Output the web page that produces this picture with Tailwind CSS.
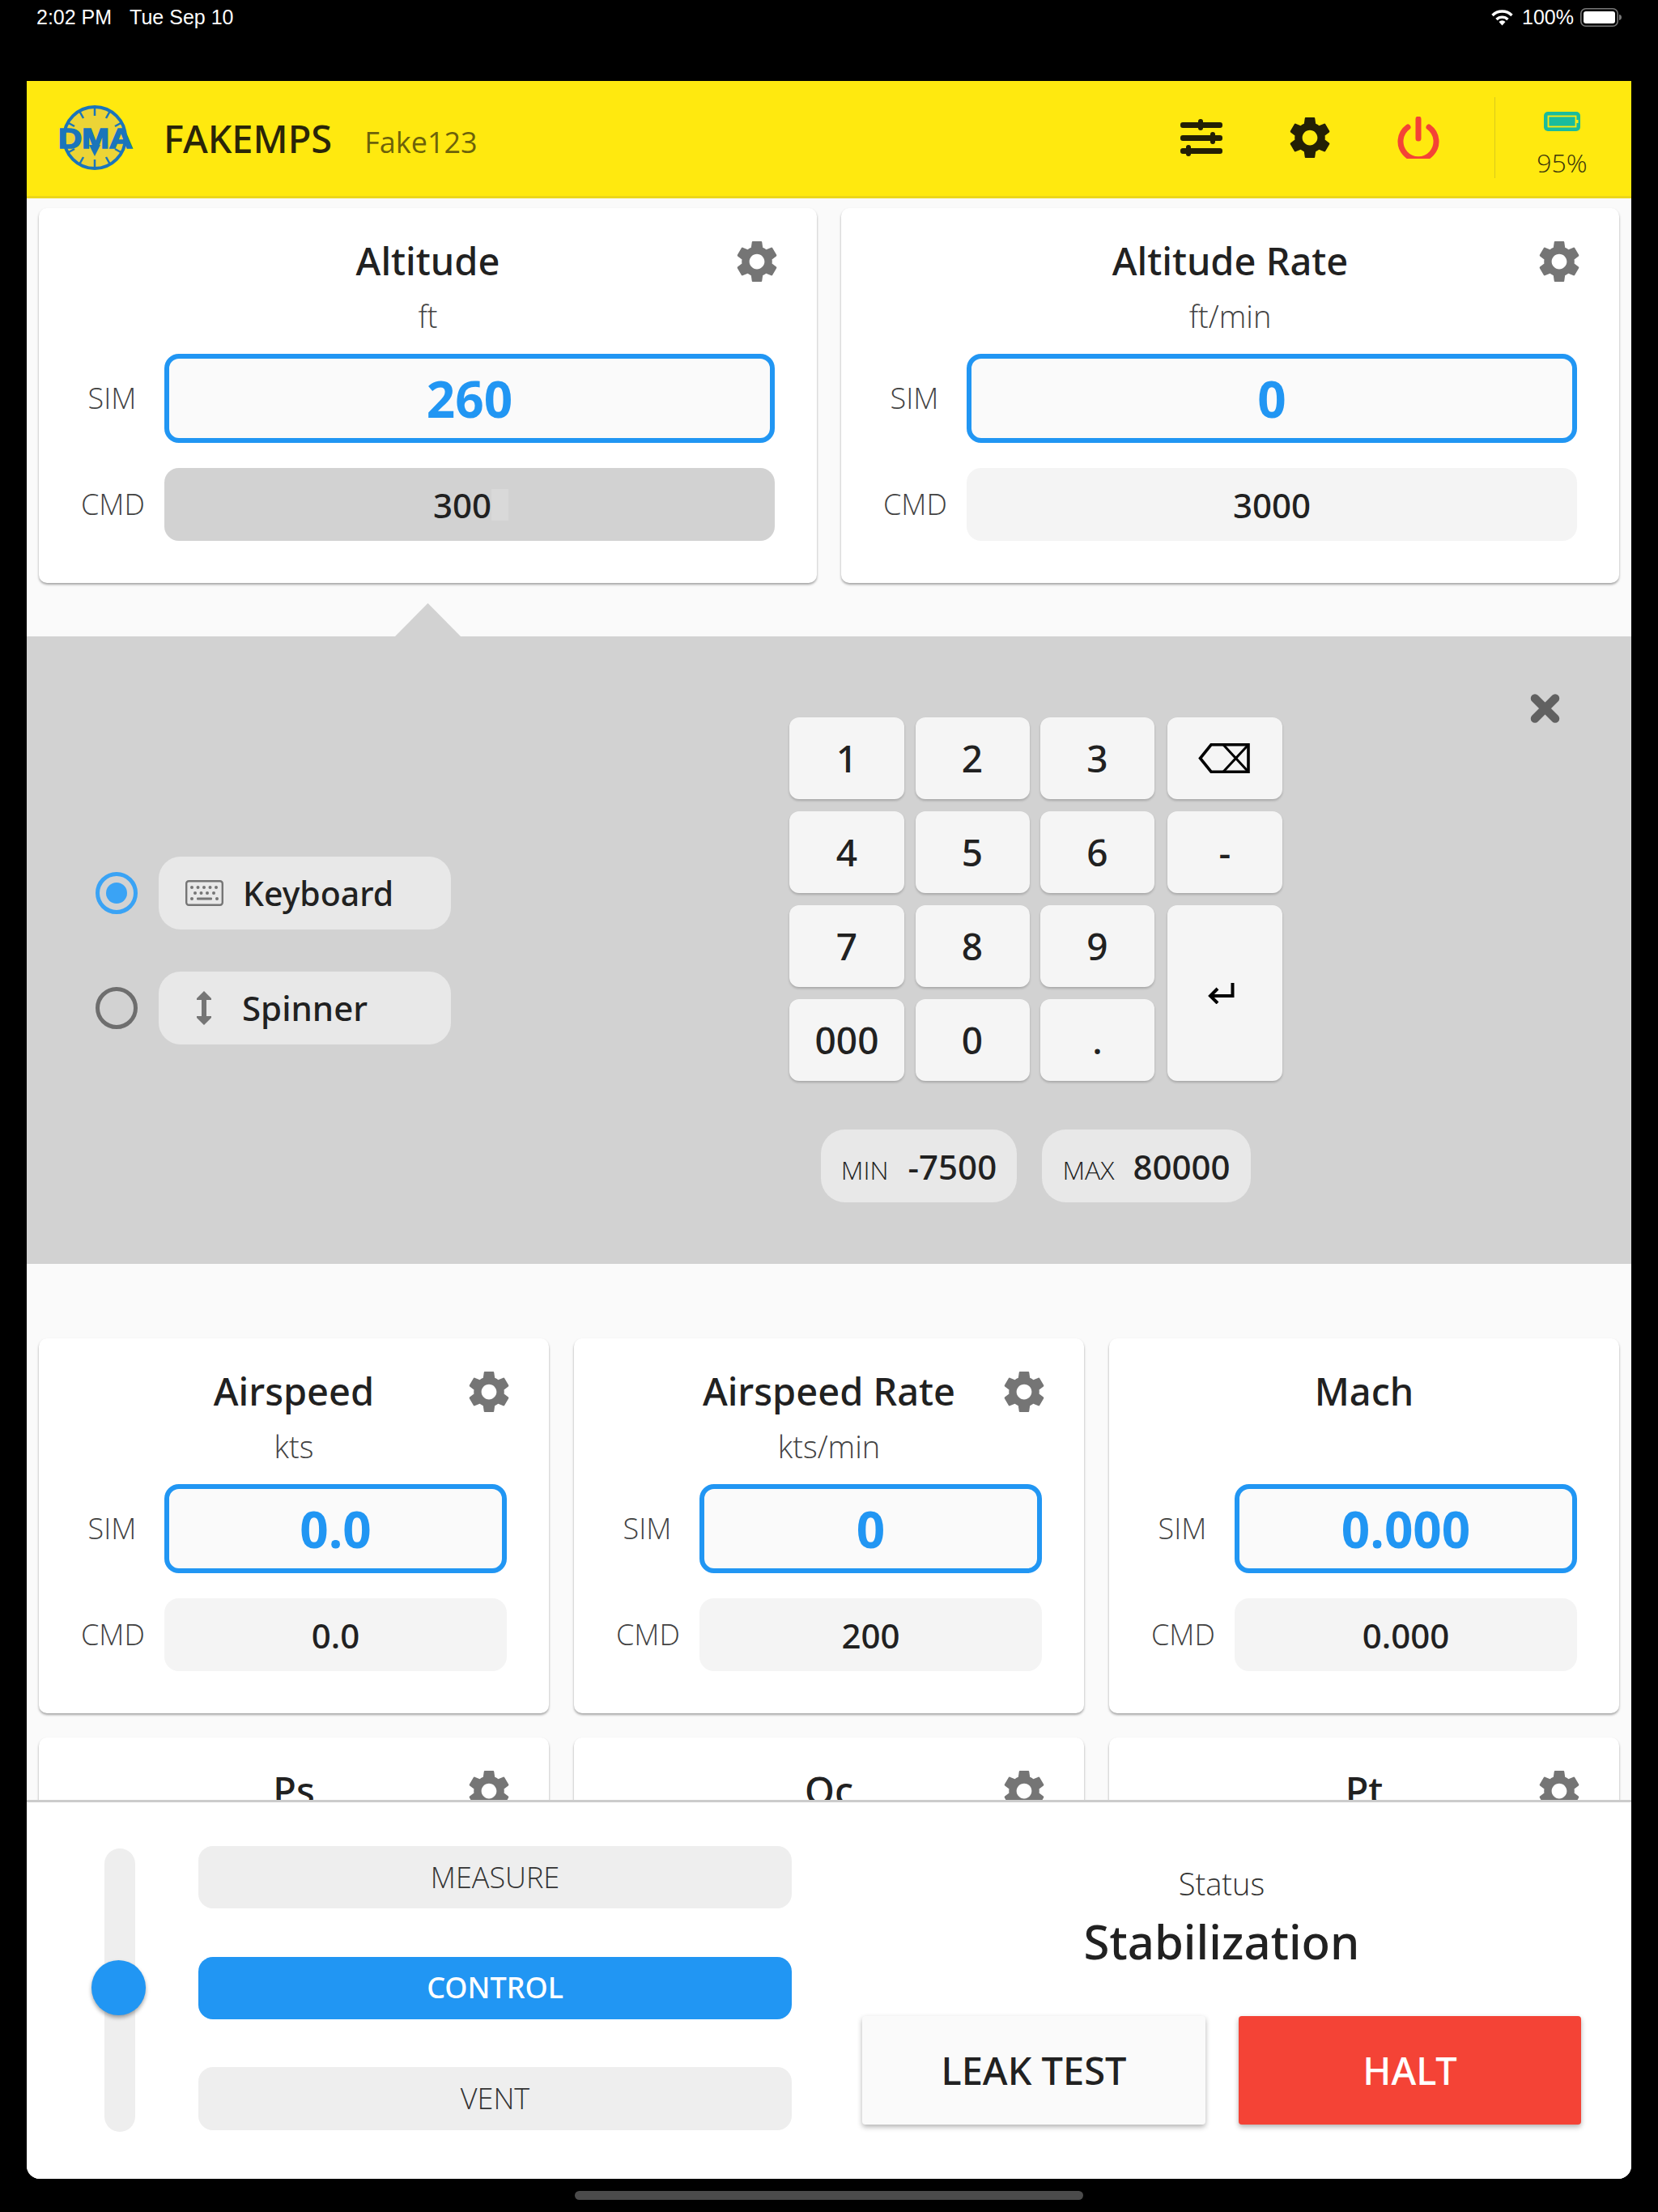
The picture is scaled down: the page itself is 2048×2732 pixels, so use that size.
<!DOCTYPE html>
<html lang="en">
<head>
    <meta charset="UTF-8">
    <title>FAKEMPS</title>
    <script src="https://cdn.jsdelivr.net/npm/@tailwindcss/browser@4"></script>
</head>
<body class="bg-black font-['Open_Sans',sans-serif] text-[#212121]">
    <svg class="hidden">
        <symbol id="gear" viewBox="2.4 2.4 19.2 19.2">
            <path d="M19.14,12.94c0.04-0.3,0.06-0.61,0.06-0.94c0-0.32-0.02-0.64-0.07-0.94l2.03-1.58c0.18-0.14,0.23-0.41,0.12-0.61 l-1.92-3.32c-0.12-0.22-0.37-0.29-0.59-0.22l-2.39,0.96c-0.5-0.38-1.03-0.7-1.62-0.94L14.4,2.81c-0.04-0.24-0.24-0.41-0.48-0.41 h-3.84c-0.24,0-0.43,0.17-0.47,0.41L9.25,5.35C8.66,5.59,8.12,5.92,7.63,6.29L5.24,5.33c-0.22-0.08-0.47,0-0.59,0.22L2.74,8.87 C2.62,9.08,2.66,9.34,2.86,9.48l2.03,1.58C4.84,11.36,4.8,11.69,4.8,12s0.02,0.64,0.07,0.94l-2.03,1.58 c-0.18,0.14-0.23,0.41-0.12,0.61l1.92,3.32c0.12,0.22,0.37,0.29,0.59,0.22l2.39-0.96c0.5,0.38,1.03,0.7,1.62,0.94l0.36,2.54 c0.05,0.24,0.24,0.41,0.48,0.41h3.84c0.24,0,0.44-0.17,0.47-0.41l0.36-2.54c0.59-0.24,1.13-0.56,1.62-0.94l2.39,0.96 c0.22,0.08,0.47,0,0.59-0.22l1.92-3.32c0.12-0.22,0.07-0.47-0.12-0.61L19.14,12.94z M12,15.6c-1.98,0-3.6-1.62-3.6-3.6 s1.62-3.6,3.6-3.6s3.6,1.62,3.6,3.6S13.98,15.6,12,15.6z" fill="currentColor"/>
        </symbol>
    </svg>

    <!-- iOS status bar -->
    <div class="h-[100px] pt-[7px] pl-[45px] pr-[45px] flex justify-between items-start text-white font-['Liberation_Sans',sans-serif] text-[25px] leading-[28px]">
        <div class="flex gap-[22px]"><span>2:02 PM</span><span>Tue Sep 10</span></div>
        <div class="flex items-center">
            <svg class="w-[27px] h-[21px] mr-[11px]" viewBox="0 0 27 21" fill="none" stroke="white" stroke-width="3.4">
                <path d="M1.5 8a17 17 0 0 1 24 0"/>
                <path d="M6.5 13a10 10 0 0 1 14 0"/>
                <path d="M13.5 20.5l-4-4.500a5.500 5.500 0 0 1 8 0z" fill="white" stroke="none"/>
            </svg>
            <span class="mr-[8px]">100%</span>
            <svg class="w-[51px] h-[23px]" viewBox="0 0 51 23">
                <rect x="0.8" y="0.8" width="45.400" height="21.4" rx="6" fill="none" stroke="#777777" stroke-width="1.6"/>
                <rect x="4" y="4" width="39" height="15" rx="3" fill="white"/>
                <path d="M48 8v7a3.5 3.5 0 0 0 3-3.500a3.500 3.500 0 0 0-3-3.500z" fill="#777777"/>
            </svg>
        </div>
    </div>

    <div class="ml-[33px] w-[1982px] h-[2591px] flex flex-col rounded-b-[16px] overflow-hidden bg-white">
        <!-- header -->
        <header class="h-[145px] shrink-0 bg-[#ffe90f] border-b-[3px] border-[#ecd71a] flex items-center pl-[39px] pr-[3px] relative">
            <svg class="w-[92px] h-[84px] overflow-visible" viewBox="0 0 92 84">
                <circle cx="45" cy="41" r="38" fill="#ecd436" stroke="#1a75bb" stroke-width="4"/>
                <path d="M45 3v11M45 68v11M26 8l5 9M64 8l-5 9M26 74l5-9M64 74l-5-9M11 22l9 5M79 22l-9 5M11 60l9-5M79 60l-9-5" stroke="#1a75bb" stroke-width="2.5"/>
                <path d="M38 50l7 14l7-14z" fill="#1a75bb"/>
                <text x="0" y="54" textLength="92" lengthAdjust="spacingAndGlyphs" font-family="Liberation Sans" font-weight="700" font-size="35" fill="#1a75bb" stroke="#1a75bb" stroke-width="1.600">DMA</text>
            </svg>
            <span class="ml-[38px] text-[47px] font-['Noto_Sans'] font-medium text-[#2a2508] leading-none mt-[1px]">FAKEMPS</span>
            <span class="ml-[40px] text-[36px] text-[#2a2508]/70 leading-none mt-[10px]">Fake123</span>
            <div class="ml-auto flex items-center h-[100px] -mt-[2px]">
                <svg class="w-[52px] h-[46px]" viewBox="0 0 52 46" fill="#231f05">
                    <rect x="0" y="4" width="52" height="7" rx="3"/>
                    <rect x="0" y="20" width="52" height="7" rx="3"/>
                    <rect x="0" y="36" width="52" height="7" rx="3"/>
                    <rect x="22" y="0" width="6" height="14" rx="3"/>
                    <rect x="37" y="16" width="6" height="15" rx="3"/>
                    <rect x="7" y="32" width="6" height="14" rx="3"/>
                </svg>
                <svg class="w-[50px] h-[50px] ml-[83px] text-[#231f05]"><use href="#gear"/></svg>
                <svg class="w-[52px] h-[52px] ml-[83px]" viewBox="0 0 52 52" fill="none" stroke="#f44336" stroke-width="7" stroke-linecap="round">
                    <path d="M13 13a22 22 0 1 0 26 0"/>
                    <path d="M26 3v24"/>
                </svg>
                <div class="w-[1px] h-[100px] ml-[68px] bg-[#d9c81c]"></div>
                <div class="w-[165px] flex flex-col items-center mt-[20px]">
                    <svg class="w-[45px] h-[24px] -mt-[6px]" viewBox="0 0 45 24">
                        <rect x="0" y="0" width="45" height="24" rx="5" fill="#1abc9c"/>
                        <rect x="5.500" y="5.500" width="34" height="13" fill="#1abc9c" stroke="#ffe90f" stroke-width="1.800"/>
                        <rect x="40" y="10" width="2.500" height="4" fill="#ffe90f"/>
                    </svg>
                    <span class="text-[32px] font-light text-[#3a340a] leading-none mt-[23px]">95%</span>
                </div>
            </div>
        </header>

        <!-- scrolling content -->
        <main class="flex-1 min-h-0 overflow-hidden bg-[#fafafa] pt-[12px]">
            <div class="grid grid-cols-2 gap-[30px] px-[15px]">
                <div class="relative h-[463px] bg-white rounded-[10px] shadow-[0_2px_3px_rgba(0,0,0,0.35)] text-center">
                    <svg class="absolute top-[41px] right-[49px] w-[50px] h-[50px] text-[#757575]"><use href="#gear"/></svg>
                    <div class="pt-[40px] h-[100px] text-[47px] font-['Noto_Sans'] font-medium leading-[50px]">Altitude</div>
                    <div class="h-[80px] text-[38px] font-light leading-[66px] text-[#424242]">ft</div>
                    <div class="flex items-center pl-[52px] pr-[52px] gap-[26px]">
                        <div class="w-[77px] text-[36px] font-light text-[#424242]">SIM</div>
                        <div class="flex-1 h-[110px] rounded-[18px] border-[6px] border-[#2196f3] bg-[#fafafa] flex items-center justify-center text-[62px] font-bold text-[#2196f3]">260</div>
                    </div>
                    <div class="flex items-center pl-[52px] pr-[52px] gap-[26px] mt-[31px]">
                        <div class="w-[77px] text-[36px] font-light text-[#424242]">CMD</div>
                        <div class="flex-1 h-[90px] rounded-[18px] bg-[#d2d2d2] flex items-center justify-center text-[42px] font-['Noto_Sans'] font-medium pl-[9px]"><span class="-ml-[6px]">300</span><span class="w-[21px] h-[39px] bg-[#d9d9d9]"></span></div>
                    </div>
                </div>
                <div class="relative h-[463px] bg-white rounded-[10px] shadow-[0_2px_3px_rgba(0,0,0,0.35)] text-center">
                    <svg class="absolute top-[41px] right-[49px] w-[50px] h-[50px] text-[#757575]"><use href="#gear"/></svg>
                    <div class="pt-[40px] h-[100px] text-[47px] font-['Noto_Sans'] font-medium leading-[50px]">Altitude Rate</div>
                    <div class="h-[80px] text-[38px] font-light leading-[66px] text-[#424242]">ft/min</div>
                    <div class="flex items-center pl-[52px] pr-[52px] gap-[26px]">
                        <div class="w-[77px] text-[36px] font-light text-[#424242]">SIM</div>
                        <div class="flex-1 h-[110px] rounded-[18px] border-[6px] border-[#2196f3] bg-[#fafafa] flex items-center justify-center text-[62px] font-bold text-[#2196f3]">0</div>
                    </div>
                    <div class="flex items-center pl-[52px] pr-[52px] gap-[26px] mt-[31px]">
                        <div class="w-[77px] text-[36px] font-light text-[#424242]">CMD</div>
                        <div class="flex-1 h-[90px] rounded-[18px] bg-[#f4f4f4] flex items-center justify-center text-[42px] font-['Noto_Sans'] font-medium">3000</div>
                    </div>
                </div>
            </div>

            <!-- entry panel -->
            <section class="relative mt-[66px] h-[775px] bg-[#d2d2d2] flex items-center pl-[85px]">
                <svg class="absolute -top-[41px] left-[454px] w-[83px] h-[42px]" viewBox="0 0 83 42"><path d="M41.5 0L83 42H0z" fill="#d2d2d2"/></svg>
                <svg class="absolute top-[71px] right-[88px] w-[37px] h-[36px]" viewBox="0 0 37 36" stroke="#616161" stroke-width="10.500" stroke-linecap="round"><path d="M6 5.500l25 25M31 5.500l-25 25"/></svg>

                <div class="flex flex-col gap-[52px] shrink-0">
                    <div class="flex items-center gap-[26px]">
                        <div class="w-[52px] h-[52px] rounded-full border-[5px] border-[#3aa3f5] flex items-center justify-center"><div class="w-[26px] h-[26px] rounded-full bg-[#3aa3f5]"></div></div>
                        <div class="w-[361px] h-[90px] rounded-[27px] bg-[#e8e8e8] flex items-center pl-[33px] text-[41px] font-['Noto_Sans'] font-medium">
                            <svg class="w-[47px] h-[32px] mr-[24px]" viewBox="0 0 47 32" fill="#757575">
                                <rect x="1.2" y="1.2" width="44.6" height="29.6" rx="3" fill="none" stroke="#757575" stroke-width="2.4"/>
                                <circle cx="8" cy="9" r="2"/><circle cx="15.500" cy="9" r="2"/><circle cx="23" cy="9" r="2"/><circle cx="30.500" cy="9" r="2"/><circle cx="38" cy="9" r="2"/>
                                <circle cx="12" cy="16" r="2"/><circle cx="19.500" cy="16" r="2"/><circle cx="27" cy="16" r="2"/><circle cx="35" cy="16" r="2"/>
                                <circle cx="8" cy="23" r="2"/><rect x="14" y="21.500" width="19" height="3" rx="1"/><circle cx="39" cy="23" r="2"/>
                            </svg>
                            <span class="mt-[2px]">Keyboard</span>
                        </div>
                    </div>
                    <div class="flex items-center gap-[26px]">
                        <div class="w-[52px] h-[52px] rounded-full border-[5px] border-[#6e6e6e]"></div>
                        <div class="w-[361px] h-[90px] rounded-[27px] bg-[#e8e8e8] flex items-center pl-[47px] text-[42px] font-['Noto_Sans'] font-medium">
                            <svg class="w-[18px] h-[42px] mr-[38px]" viewBox="0 0 18 42" fill="#757575"><path d="M9 0l9 9v2h-6v20h6v2l-9 9l-9-9v-2h6V11H0V9z"/></svg>
                            <span class="-mt-[1px]">Spinner</span>
                        </div>
                    </div>
                </div>

                <div class="self-start mt-[100px] ml-[418px]">
                    <div class="grid grid-cols-[142px_141px_141px_144.5px] grid-rows-[101px_101px_101px_101px] gap-x-[13.5px] gap-y-[15px] text-[46px] font-['Noto_Sans'] font-medium">
                        <button class="rounded-[12px] bg-[#f5f5f5] shadow-[0_2px_3px_rgba(0,0,0,0.2)] flex items-center justify-center">1</button>
                        <button class="rounded-[12px] bg-[#f5f5f5] shadow-[0_2px_3px_rgba(0,0,0,0.2)] flex items-center justify-center">2</button>
                        <button class="rounded-[12px] bg-[#f5f5f5] shadow-[0_2px_3px_rgba(0,0,0,0.2)] flex items-center justify-center">3</button>
                        <button class="ml-[2.5px] rounded-[12px] bg-[#f5f5f5] shadow-[0_2px_3px_rgba(0,0,0,0.2)] flex items-center justify-center">
                            <svg class="w-[64px] h-[37px] -ml-[2px]" viewBox="0 0 64 37" fill="none" stroke="black" stroke-width="3.600"><path d="M62 1.800H16L2.500 18.500L16 35.200h46z"/><path d="M31 1.800l31 33.400M62 1.800L31 35.200" stroke-width="3"/></svg>
                        </button>
                        <button class="rounded-[12px] bg-[#f5f5f5] shadow-[0_2px_3px_rgba(0,0,0,0.2)] flex items-center justify-center">4</button>
                        <button class="rounded-[12px] bg-[#f5f5f5] shadow-[0_2px_3px_rgba(0,0,0,0.2)] flex items-center justify-center">5</button>
                        <button class="rounded-[12px] bg-[#f5f5f5] shadow-[0_2px_3px_rgba(0,0,0,0.2)] flex items-center justify-center">6</button>
                        <button class="ml-[2.5px] rounded-[12px] bg-[#f5f5f5] shadow-[0_2px_3px_rgba(0,0,0,0.2)] flex items-center justify-center">-</button>
                        <button class="rounded-[12px] bg-[#f5f5f5] shadow-[0_2px_3px_rgba(0,0,0,0.2)] flex items-center justify-center">7</button>
                        <button class="rounded-[12px] bg-[#f5f5f5] shadow-[0_2px_3px_rgba(0,0,0,0.2)] flex items-center justify-center">8</button>
                        <button class="rounded-[12px] bg-[#f5f5f5] shadow-[0_2px_3px_rgba(0,0,0,0.2)] flex items-center justify-center">9</button>
                        <button class="ml-[2.5px] row-span-2 rounded-[12px] bg-[#f5f5f5] shadow-[0_2px_3px_rgba(0,0,0,0.2)] flex items-center justify-center">
                            <svg class="w-[33px] h-[26px] -ml-[9px] mt-[1px]" viewBox="0 0 33 26" fill="none" stroke="black" stroke-width="4"><path d="M30.500 0v16H5"/><path d="M12 7l-9 9l9 9"/></svg>
                        </button>
                        <button class="rounded-[12px] bg-[#f5f5f5] shadow-[0_2px_3px_rgba(0,0,0,0.2)] flex items-center justify-center">000</button>
                        <button class="rounded-[12px] bg-[#f5f5f5] shadow-[0_2px_3px_rgba(0,0,0,0.2)] flex items-center justify-center">0</button>
                        <button class="rounded-[12px] bg-[#f5f5f5] shadow-[0_2px_3px_rgba(0,0,0,0.2)] flex items-center justify-center">.</button>
                    </div>
                    <div class="flex justify-center gap-[31px] mt-[60px]">
                        <div class="w-[242px] h-[90px] rounded-[30px] bg-[#e8e8e8] flex items-baseline justify-center gap-[24px] pt-[14px] text-[42px] font-['Noto_Sans'] font-medium">
                            <span class="text-[32px] font-['Open_Sans'] font-light">MIN</span><span>-7500</span>
                        </div>
                        <div class="w-[258px] h-[90px] rounded-[30px] bg-[#e8e8e8] flex items-baseline justify-center gap-[23px] pt-[14px] text-[42px] font-['Noto_Sans'] font-medium">
                            <span class="text-[32px] font-['Open_Sans'] font-light">MAX</span><span>80000</span>
                        </div>
                    </div>
                </div>
            </section>

            <div class="grid grid-cols-3 gap-x-[31px] gap-y-[30px] px-[15px] mt-[92px]">
                <div class="relative h-[463px] bg-white rounded-[10px] shadow-[0_2px_3px_rgba(0,0,0,0.35)] text-center">
                    <svg class="absolute top-[41px] right-[49px] w-[50px] h-[50px] text-[#757575]"><use href="#gear"/></svg>
                    <div class="pt-[40px] h-[100px] text-[47px] font-['Noto_Sans'] font-medium leading-[50px]">Airspeed</div>
                    <div class="h-[80px] text-[38px] font-light leading-[66px] text-[#424242]">kts</div>
                    <div class="flex items-center pl-[52px] pr-[52px] gap-[26px]">
                        <div class="w-[77px] text-[36px] font-light text-[#424242]">SIM</div>
                        <div class="flex-1 h-[110px] rounded-[18px] border-[6px] border-[#2196f3] bg-[#fafafa] flex items-center justify-center text-[62px] font-bold text-[#2196f3]">0.0</div>
                    </div>
                    <div class="flex items-center pl-[52px] pr-[52px] gap-[26px] mt-[31px]">
                        <div class="w-[77px] text-[36px] font-light text-[#424242]">CMD</div>
                        <div class="flex-1 h-[90px] rounded-[18px] bg-[#f4f4f4] flex items-center justify-center text-[42px] font-['Noto_Sans'] font-medium">0.0</div>
                    </div>
                </div>
                <div class="relative h-[463px] bg-white rounded-[10px] shadow-[0_2px_3px_rgba(0,0,0,0.35)] text-center">
                    <svg class="absolute top-[41px] right-[49px] w-[50px] h-[50px] text-[#757575]"><use href="#gear"/></svg>
                    <div class="pt-[40px] h-[100px] text-[47px] font-['Noto_Sans'] font-medium leading-[50px]">Airspeed Rate</div>
                    <div class="h-[80px] text-[38px] font-light leading-[66px] text-[#424242]">kts/min</div>
                    <div class="flex items-center pl-[52px] pr-[52px] gap-[26px]">
                        <div class="w-[77px] text-[36px] font-light text-[#424242]">SIM</div>
                        <div class="flex-1 h-[110px] rounded-[18px] border-[6px] border-[#2196f3] bg-[#fafafa] flex items-center justify-center text-[62px] font-bold text-[#2196f3]">0</div>
                    </div>
                    <div class="flex items-center pl-[52px] pr-[52px] gap-[26px] mt-[31px]">
                        <div class="w-[77px] text-[36px] font-light text-[#424242]">CMD</div>
                        <div class="flex-1 h-[90px] rounded-[18px] bg-[#f4f4f4] flex items-center justify-center text-[42px] font-['Noto_Sans'] font-medium">200</div>
                    </div>
                </div>
                <div class="relative h-[463px] bg-white rounded-[10px] shadow-[0_2px_3px_rgba(0,0,0,0.35)] text-center">
                    <div class="pt-[40px] h-[100px] text-[47px] font-['Noto_Sans'] font-medium leading-[50px]">Mach</div>
                    <div class="h-[80px]"></div>
                    <div class="flex items-center pl-[52px] pr-[52px] gap-[26px]">
                        <div class="w-[77px] text-[36px] font-light text-[#424242]">SIM</div>
                        <div class="flex-1 h-[110px] rounded-[18px] border-[6px] border-[#2196f3] bg-[#fafafa] flex items-center justify-center text-[62px] font-bold text-[#2196f3]">0.000</div>
                    </div>
                    <div class="flex items-center pl-[52px] pr-[52px] gap-[26px] mt-[31px]">
                        <div class="w-[77px] text-[36px] font-light text-[#424242]">CMD</div>
                        <div class="flex-1 h-[90px] rounded-[18px] bg-[#f4f4f4] flex items-center justify-center text-[42px] font-['Noto_Sans'] font-medium">0.000</div>
                    </div>
                </div>
                <div class="relative h-[463px] bg-white rounded-[10px] shadow-[0_2px_3px_rgba(0,0,0,0.35)] text-center">
                    <svg class="absolute top-[41px] right-[49px] w-[50px] h-[50px] text-[#757575]"><use href="#gear"/></svg>
                    <div class="pt-[40px] text-[47px] font-['Noto_Sans'] font-medium leading-[50px]">Ps</div>
                </div>
                <div class="relative h-[463px] bg-white rounded-[10px] shadow-[0_2px_3px_rgba(0,0,0,0.35)] text-center">
                    <svg class="absolute top-[41px] right-[49px] w-[50px] h-[50px] text-[#757575]"><use href="#gear"/></svg>
                    <div class="pt-[40px] text-[47px] font-['Noto_Sans'] font-medium leading-[50px]">Qc</div>
                </div>
                <div class="relative h-[463px] bg-white rounded-[10px] shadow-[0_2px_3px_rgba(0,0,0,0.35)] text-center">
                    <svg class="absolute top-[41px] right-[49px] w-[50px] h-[50px] text-[#757575]"><use href="#gear"/></svg>
                    <div class="pt-[40px] text-[47px] font-['Noto_Sans'] font-medium leading-[50px]">Pt</div>
                </div>
            </div>
        </main>

        <!-- bottom controls -->
        <footer class="h-[468px] shrink-0 bg-white border-t-[3px] border-[#cccccc] flex pl-[96px]">
            <div class="relative w-[38px] h-[350px] mt-[57px] rounded-full bg-[#eeeeee]">
                <div class="absolute top-[138px] -left-[16px] w-[67px] h-[68px] rounded-full bg-[#2196f3] shadow-[0_3px_5px_rgba(0,0,0,0.35)]"></div>
            </div>
            <div class="w-[733px] ml-[78px] mt-[54px] h-[351px] flex flex-col justify-between text-[36px] font-light text-center">
                <div class="h-[77px] rounded-[18px] bg-[#eeeeee] flex items-center justify-center text-[#333333]">MEASURE</div>
                <div class="h-[77px] rounded-[18px] bg-[#2196f3] flex items-center justify-center text-white font-['Noto_Sans'] font-medium">CONTROL</div>
                <div class="h-[78px] rounded-[18px] bg-[#eeeeee] flex items-center justify-center text-[#333333]">VENT</div>
            </div>
            <div class="w-[888px] ml-[87px] flex flex-col items-center">
                <div class="mt-[75px] text-[38px] font-light leading-[50px] text-[#333333]">Status</div>
                <div class="mt-[12px] text-[58px] font-['Noto_Sans'] font-medium leading-[70px]">Stabilization</div>
                <div class="mt-[57px] w-full flex justify-between">
                    <button class="w-[424px] h-[134px] rounded-[4px] bg-[#fafafa] shadow-[0_3px_6px_rgba(0,0,0,0.3)] text-[47px] font-['Noto_Sans'] font-medium">LEAK TEST</button>
                    <button class="w-[423px] h-[134px] rounded-[4px] bg-[#f44336] shadow-[0_3px_6px_rgba(0,0,0,0.3)] text-[47px] font-['Noto_Sans'] font-medium text-white">HALT</button>
                </div>
            </div>
        </footer>
    </div>

    <div class="flex justify-center mt-[15px]"><div class="w-[628px] h-[11px] rounded-full bg-[#4b4b4b]"></div></div>
</body>
</html>
